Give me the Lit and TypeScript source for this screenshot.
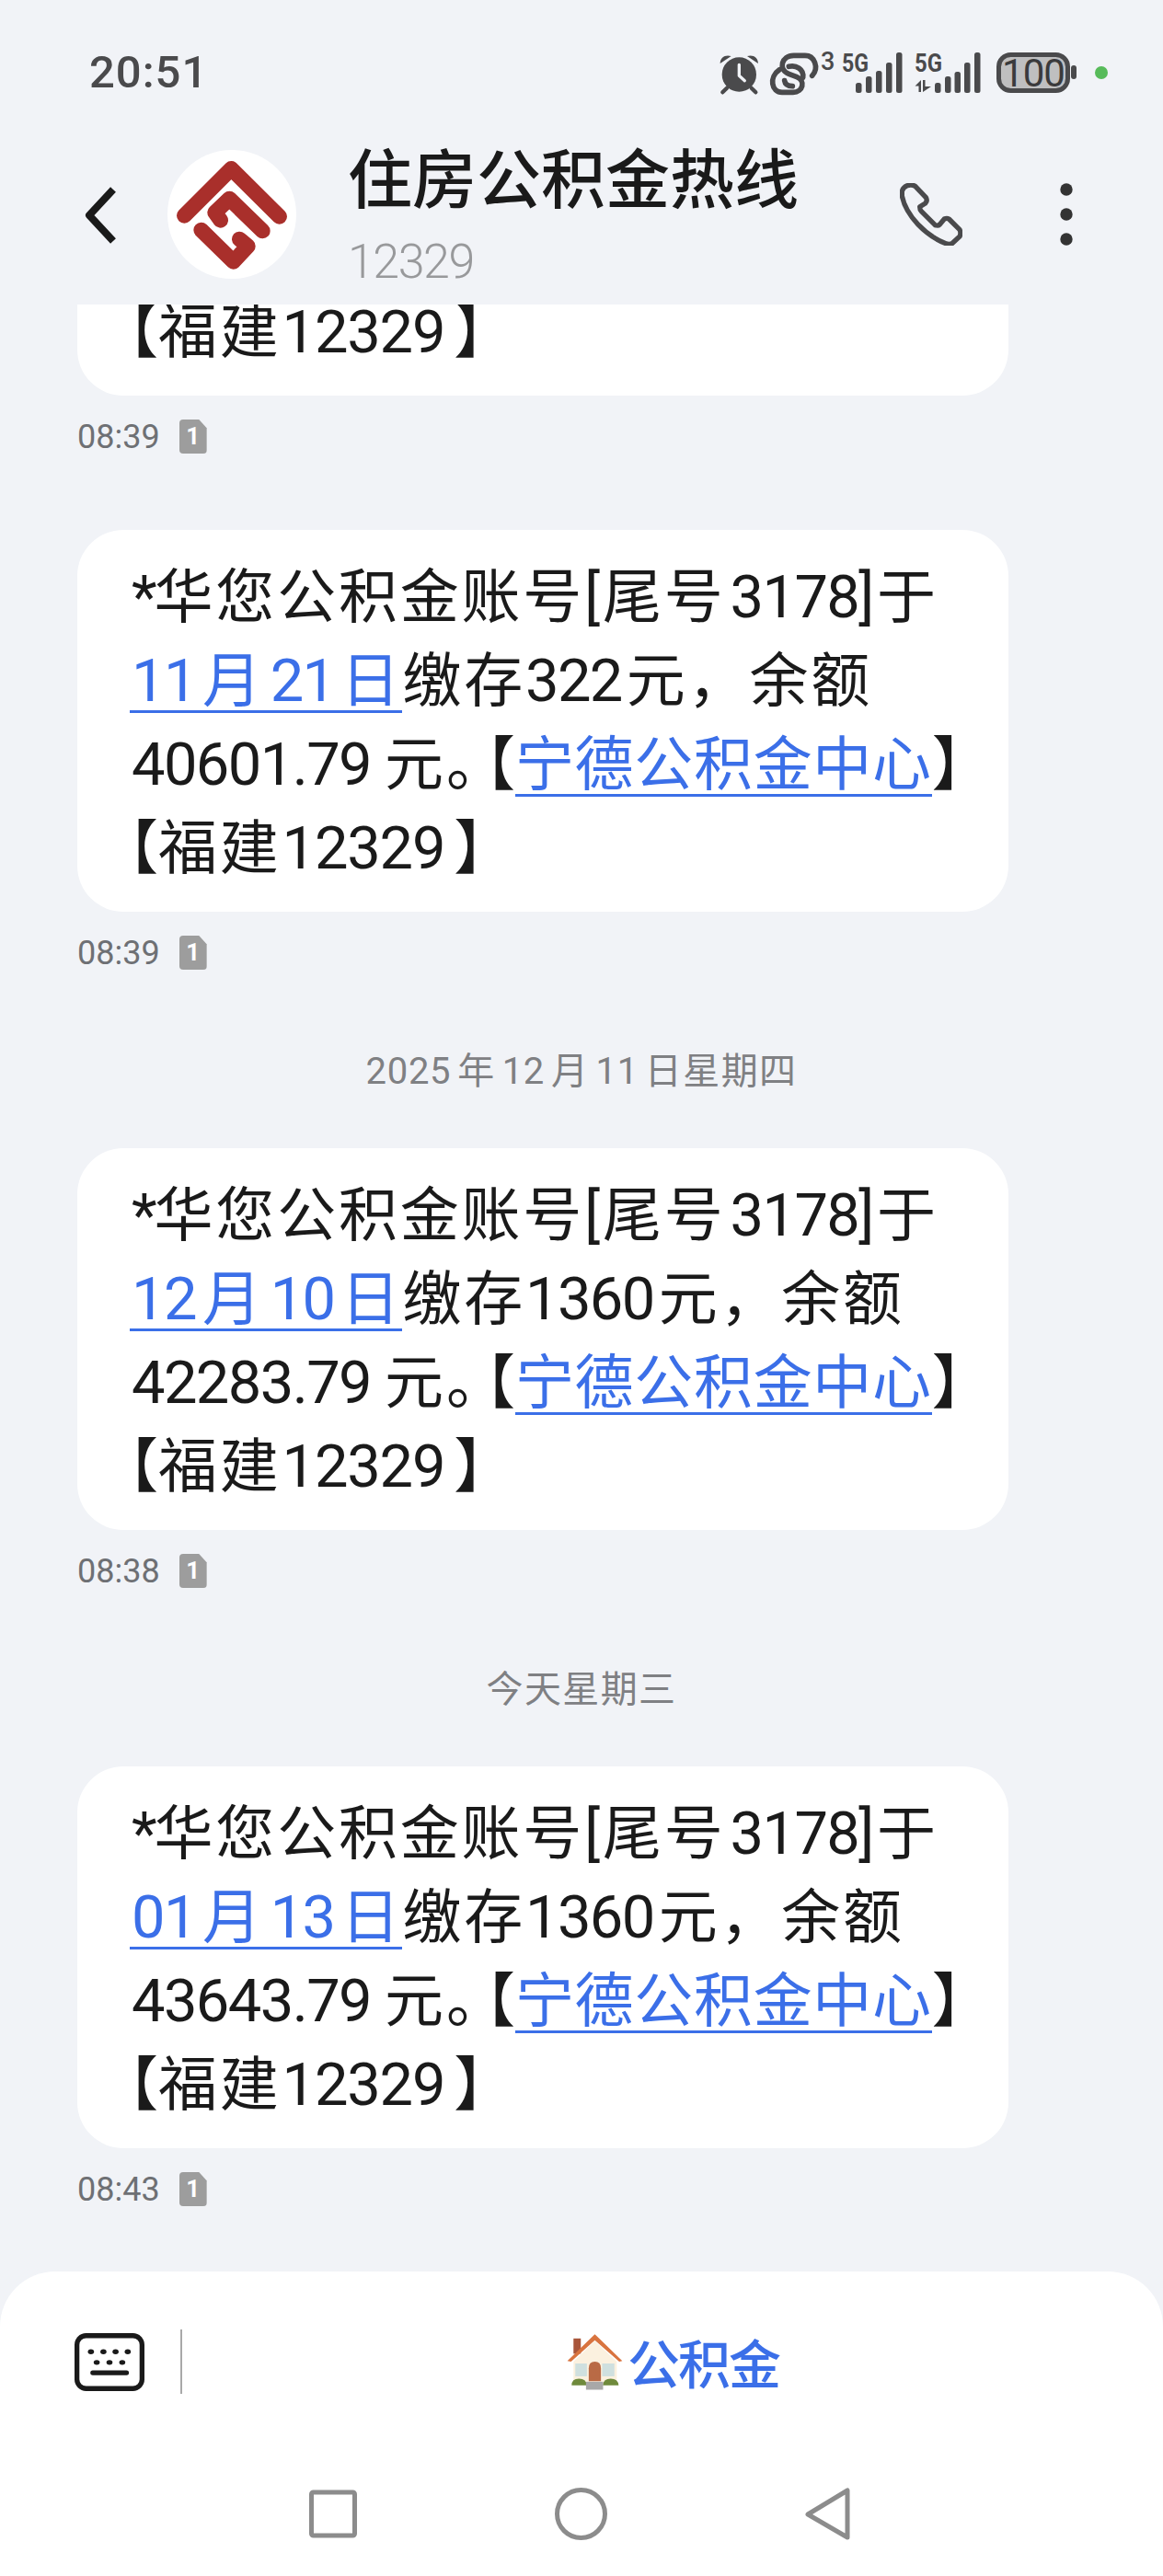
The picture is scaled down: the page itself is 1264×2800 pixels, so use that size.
import { LitElement, html, css, svg } from "lit";
import { customElement } from "lit/decorators.js";

const ICON = "#4a4a4c";

// bars as [x, top] in page px, all end at y=101
const signalA = [[930, 90], [941, 83], [952, 77], [963, 68], [974, 57]];
const signalB = [[1016, 90], [1027, 83], [1037.5, 78], [1048, 68], [1059, 57]];

const statusIcons = svg`
  <g transform="translate(770 45) scale(.3333)">
    <circle cx="100" cy="108" r="56" fill="${ICON}"/>
    <path d="M38 72C38 52 55 42 74 48ZM162 72C162 52 145 42 126 48Z" fill="${ICON}"/>
    <path d="M60 152L46 166M140 152L154 166" stroke="${ICON}" stroke-width="13" stroke-linecap="round"/>
    <path d="M100 76V112L118 128" fill="none" stroke="#f1f3f7" stroke-width="10" stroke-linecap="round" stroke-linejoin="round"/>
    <g fill="none" stroke="${ICON}" stroke-width="17" stroke-linecap="round">
      <path d="M338 112C362 85 345 46 315 46H278C238 46 226 92 262 106L288 116C318 128 308 166 276 166H240C205 166 196 116 232 92"/>
      <path d="M262 82C285 76 312 90 308 118M248 128C250 142 262 146 274 146"/>
    </g>
  </g>
  <text x="892" y="76" class="s3">3</text>
  <text x="915" y="78" class="s5" textLength="29" lengthAdjust="spacingAndGlyphs">5G</text>
  <text x="994" y="78" class="s5" textLength="30" lengthAdjust="spacingAndGlyphs">5G</text>
  ${[...signalA, ...signalB].map(([x, y]) => svg`<rect x="${x}" y="${y}" width="6.5" height="${101 - y}" rx="2.5" fill="${ICON}"/>`)}
  <path d="M1001 87V100H998.500V93.500H994.500ZM1003 87V100L1012 94H1005.500V87Z" fill="${ICON}"/>
  <rect x="1085.500" y="59.500" width="75" height="39" rx="13" fill="#bfbfc0" stroke="${ICON}" stroke-width="5"/>
  <text x="1123" y="94" class="batt" text-anchor="middle">100</text>
  <rect x="1164" y="71" width="6" height="15" rx="3" fill="${ICON}"/>
  <circle cx="1197" cy="79" r="7" fill="#57bb5a"/>
`;

const logo = svg`
  <g fill="none" stroke="#a92f2b" stroke-width="50" stroke-linecap="round" stroke-linejoin="round">
    <path d="M85 235L238 82L395 238"/>
    <path d="M203 250L185 225L232 180L340 285"/>
    <path d="M140 282L245 385L292 335L265 312"/>
  </g>
`;

const house = svg`
  <rect x="190" y="132" width="24" height="50" fill="#a8553a"/>
  <path d="M190 208L260 140L332 208V280H190Z" fill="#fbf1df"/>
  <path d="M170 206L260 118L350 206L340 208L260 138L182 208Z" fill="#d9743f"/>
  <rect x="196" y="214" width="38" height="42" fill="#cfe0df"/>
  <rect x="284" y="214" width="40" height="42" fill="#cfe0df"/>
  <path d="M240 272V230Q240 208 260 208Q280 208 280 230V272Z" fill="#b96a45"/>
  <path d="M184 286Q184 264 208 264Q232 264 234 286ZM286 286Q288 264 312 264Q336 264 338 286Z" fill="#6f8a3c"/>
  <rect x="231" y="274" width="56" height="26" fill="#a8a8a8"/>
`;

interface Message {
  date: string;
  amount: string;
  balance: string;
  time: string;
}

interface Group {
  label?: string;
  items: Message[];
}

const groups: Group[] = [
  {
    items: [{ date: "11月21日", amount: "322", balance: "40601.79", time: "08:39" }],
  },
  {
    label: "2025年12月11日星期四",
    items: [{ date: "12月10日", amount: "1360", balance: "42283.79", time: "08:38" }],
  },
  {
    label: "今天星期三",
    items: [{ date: "01月13日", amount: "1360", balance: "43643.79", time: "08:43" }],
  },
];

// digits sit in their own span, the reference font sets them narrower with a small gap to CJK
function spaced(text: string) {
  const parts = text.split(/([0-9.]+)/);
  return parts.map((part, i) => {
    if (i % 2 === 0) return part;
    const start = parts[0] === "" && i === 1;
    return html`<span class="n ${start ? "start" : ""}">${part}</span>`;
  });
}

@customElement("app-root")
export class AppRoot extends LitElement {
  static styles = css`
    :host {
      display: block;
      width: 1264px;
      height: 2800px;
      overflow: hidden;
      background: #f1f3f7;
      font-family: Roboto, "Noto Sans CJK SC", sans-serif;
      color: #1a1a1a;
    }
    svg {
      display: block;
      flex: none;
    }
    .status {
      display: flex;
      justify-content: space-between;
      height: 155px;
      padding: 0 54px 0 97px;
    }
    .time {
      margin-top: 49px;
      font-size: 49px;
      line-height: 60px;
      font-weight: 500;
      letter-spacing: 1px;
      color: #4a4a4c;
    }
    .status svg {
      margin-top: 50px;
    }
    .s3 {
      font: 500 27px Roboto, sans-serif;
      fill: #4a4a4c;
    }
    .s5 {
      font: 700 28px Roboto, sans-serif;
      fill: #4a4a4c;
    }
    .batt {
      font: 400 42px Roboto, sans-serif;
      letter-spacing: -1px;
      fill: #3a3a3c;
    }
    .header {
      display: flex;
      align-items: flex-start;
      height: 176px;
      padding: 0 98px 0 90px;
    }
    .back {
      margin-top: 44px;
    }
    .avatar {
      width: 140px;
      height: 140px;
      margin: 8px 0 0 52px;
      border-radius: 50%;
      background: #fff;
      display: flex;
      align-items: center;
      justify-content: center;
    }
    .names {
      margin-left: 56px;
      flex: 1;
    }
    .title {
      font-size: 70px;
      line-height: 84px;
      font-weight: 500;
    }
    .sub {
      font-size: 52px;
      line-height: 84px;
      font-weight: 300;
      letter-spacing: -1.5px;
      color: #98999b;
      margin-top: 4px;
    }
    .phone {
      margin: 44px 106px 0 0;
    }
    .dots {
      margin-top: 44px;
    }
    .list {
      display: flex;
      flex-direction: column;
      padding-left: 84px;
    }
    .day {
      width: 1096px;
      text-align: center;
      font-size: 40px;
      line-height: 60px;
      letter-spacing: 1.4px;
      color: #7f8083;
      margin: -2px 0 53px;
    }
    .day .n {
      margin: 0 7px;
      font-size: 40px;
      letter-spacing: 0.7px;
    }
    .day .n.start {
      margin-left: 0;
    }
    .msg {
      margin-bottom: 83px;
    }
    .bubble {
      width: 1012px;
      box-sizing: border-box;
      padding: 28px 20px 23px 59px;
      background: #fff;
      border-radius: 50px;
      font-size: 64px;
      line-height: 91px;
      letter-spacing: 2.8px;
      white-space: nowrap;
    }
    .bubble.clipped {
      height: 99px;
      padding-top: 0;
      padding-bottom: 23px;
      border-radius: 0 0 50px 50px;
      overflow: hidden;
      display: flex;
      flex-direction: column;
      justify-content: flex-end;
    }
    .line {
      height: 91px;
    }
    .n {
      letter-spacing: -1.6px;
      margin: 0 5px 0 7px;
      font-size: 65px;
    }
    .n.start {
      margin-left: 0;
    }
    .star {
      letter-spacing: -3px;
    }
    .acct .n {
      margin: 0 0 0 5px;
    }
    .bal .n {
      margin-right: 15px;
    }
    .tail .n {
      margin: 0 10px 0 1px;
      letter-spacing: -1.2px;
    }
    /* half-width brackets, the way the phone's font sets them */
    .hw {
      font-feature-settings: "halt";
      letter-spacing: 0;
    }
    .hw.lead {
      margin-left: -3px;
    }
    .hw.open {
      margin-left: 11px;
    }
    .link {
      display: inline-block;
      line-height: 63px;
      color: #3b6fe8;
      border-bottom: 3px solid #3b6fe8;
    }
    .link.date {
      margin-left: -2px;
      padding-left: 2px;
    }
    .link .n {
      margin: 0 7px;
    }
    .link .n.start {
      margin-left: 0;
    }
    .org {
      letter-spacing: 0.7px;
    }
    .meta {
      display: flex;
      align-items: center;
      gap: 21px;
      height: 37px;
      margin-top: 26px;
      font-size: 36px;
      color: #6e7074;
    }
    .badge {
      width: 30px;
      height: 37px;
      border-radius: 4px;
      background: #9d9d9d;
      clip-path: polygon(0 0, 72% 0, 100% 25%, 100% 100%, 0 100%);
      color: #fff;
      font-size: 26px;
      font-weight: 700;
      line-height: 37px;
      text-align: center;
    }
    .panel {
      height: 332px;
      margin-top: -12px;
      background: #fff;
      border-radius: 60px 60px 0 0;
      box-sizing: border-box;
      padding-top: 60px;
    }
    .input {
      display: flex;
      align-items: center;
      height: 76px;
      padding-left: 81px;
    }
    .divider {
      width: 2px;
      height: 70px;
      margin-left: 39px;
      background: #a9a9a9;
    }
    .reply {
      flex: 1;
      display: flex;
      align-items: center;
      justify-content: center;
      gap: 4px;
      color: #3b6fe8;
      font-size: 57px;
      font-weight: 500;
      letter-spacing: -2px;
    }
    .reply span {
      margin-top: -2px;
    }
    .nav {
      display: flex;
      align-items: center;
      gap: 215px;
      margin-top: 99px;
      padding-left: 336px;
    }
  `;

  private renderBubble(m: Message, clipped = false) {
    const last = html`<div class="line tail"><span class="hw lead">【</span>${spaced("福建12329")}】</div>`;
    if (clipped) return html`<div class="bubble clipped">${last}</div>`;
    return html`
      <div class="bubble">
        <div class="line acct"><span class="star">*</span>华您公积金账号[尾号${spaced("3178")}]于</div>
        <div class="line"><span class="link date">${spaced(m.date)}</span>缴存${spaced(m.amount)}元，余额</div>
        <div class="line bal">
          ${spaced(m.balance)}元<span class="hw">。</span><span class="hw open">【</span><span class="link org">宁德公积金中心</span>】
        </div>
        ${last}
      </div>
    `;
  }

  private renderMeta(time: string) {
    return html`<div class="meta"><span>${time}</span><span class="badge">1</span></div>`;
  }

  render() {
    return html`
      <div class="status">
        <div class="time">20:51</div>
        <svg width="430" height="60" viewBox="780 50 430 60">${statusIcons}</svg>
      </div>
      <div class="header">
        <svg class="back" width="40" height="70" viewBox="0 0 40 70">
          <path d="M33 7L7 35L33 63" fill="none" stroke="#1a1a1a" stroke-width="8" stroke-linejoin="round"/>
        </svg>
        <div class="avatar">
          <svg width="160" height="155" viewBox="0 0 480 465">${logo}</svg>
        </div>
        <div class="names">
          <div class="title">住房公积金热线</div>
          <div class="sub">12329</div>
        </div>
        <svg class="phone" width="68" height="68" viewBox="55 58 204 204">
          <path
            d="M62 85C66 68 88 58 105 68L140 105C144 112 144 118 138 124L120 135C120 142 122 147 125 150L170 195C176 197 182 196 185 193L200 175C206 172 210 172 215 175L250 210C254 218 254 224 250 232L225 255C218 258 212 258 205 255C140 230 75 165 62 100Z"
            fill="none" stroke="${ICON}" stroke-width="16" stroke-linejoin="round"/>
        </svg>
        <svg class="dots" width="14" height="68" viewBox="0 0 14 68">
          <circle cx="7" cy="7" r="6.700" fill="#333"/>
          <circle cx="7" cy="34" r="6.700" fill="#333"/>
          <circle cx="7" cy="61" r="6.700" fill="#333"/>
        </svg>
      </div>
      <div class="list">
        <div class="msg">
          ${this.renderBubble(groups[0].items[0], true)}
          ${this.renderMeta("08:39")}
        </div>
        ${groups.map(
          (g) => html`
            ${g.label ? html`<div class="day">${spaced(g.label)}</div>` : ""}
            ${g.items.map(
              (m) => html`<div class="msg">${this.renderBubble(m)}${this.renderMeta(m.time)}</div>`
            )}
          `
        )}
      </div>
      <div class="panel">
        <div class="input">
          <svg width="76" height="63" viewBox="62 72 230 190">
            <rect x="70" y="80" width="214" height="174" rx="30" fill="none" stroke="#1a1a1a" stroke-width="16"/>
            <g fill="#1a1a1a">
              <ellipse cx="116" cy="133" rx="10" ry="8"/>
              <ellipse cx="157" cy="133" rx="10" ry="8"/>
              <ellipse cx="197" cy="133" rx="10" ry="8"/>
              <ellipse cx="237" cy="133" rx="10" ry="8"/>
              <ellipse cx="135" cy="168" rx="10" ry="8"/>
              <ellipse cx="177" cy="168" rx="10" ry="8"/>
              <ellipse cx="219" cy="168" rx="10" ry="8"/>
              <rect x="114" y="194" width="127" height="16" rx="8"/>
            </g>
          </svg>
          <div class="divider"></div>
          <div class="reply">
            <svg width="63" height="64" viewBox="165 112 190 192">${house}</svg>
            <span>公积金</span>
          </div>
        </div>
        <div class="nav">
          <svg width="52" height="53" viewBox="0 0 52 53">
            <rect x="2.500" y="3" width="47" height="47" rx="2" fill="none" stroke="#8c8c8c" stroke-width="5"/>
          </svg>
          <svg width="57" height="57" viewBox="0 0 57 57">
            <circle cx="28.500" cy="28.500" r="26" fill="none" stroke="#8c8c8c" stroke-width="5"/>
          </svg>
          <svg width="49" height="57" viewBox="0 0 49 57">
            <path d="M46 3V54L3 29Z" fill="none" stroke="#8c8c8c" stroke-width="5" stroke-linejoin="round"/>
          </svg>
        </div>
      </div>
    `;
  }
}
